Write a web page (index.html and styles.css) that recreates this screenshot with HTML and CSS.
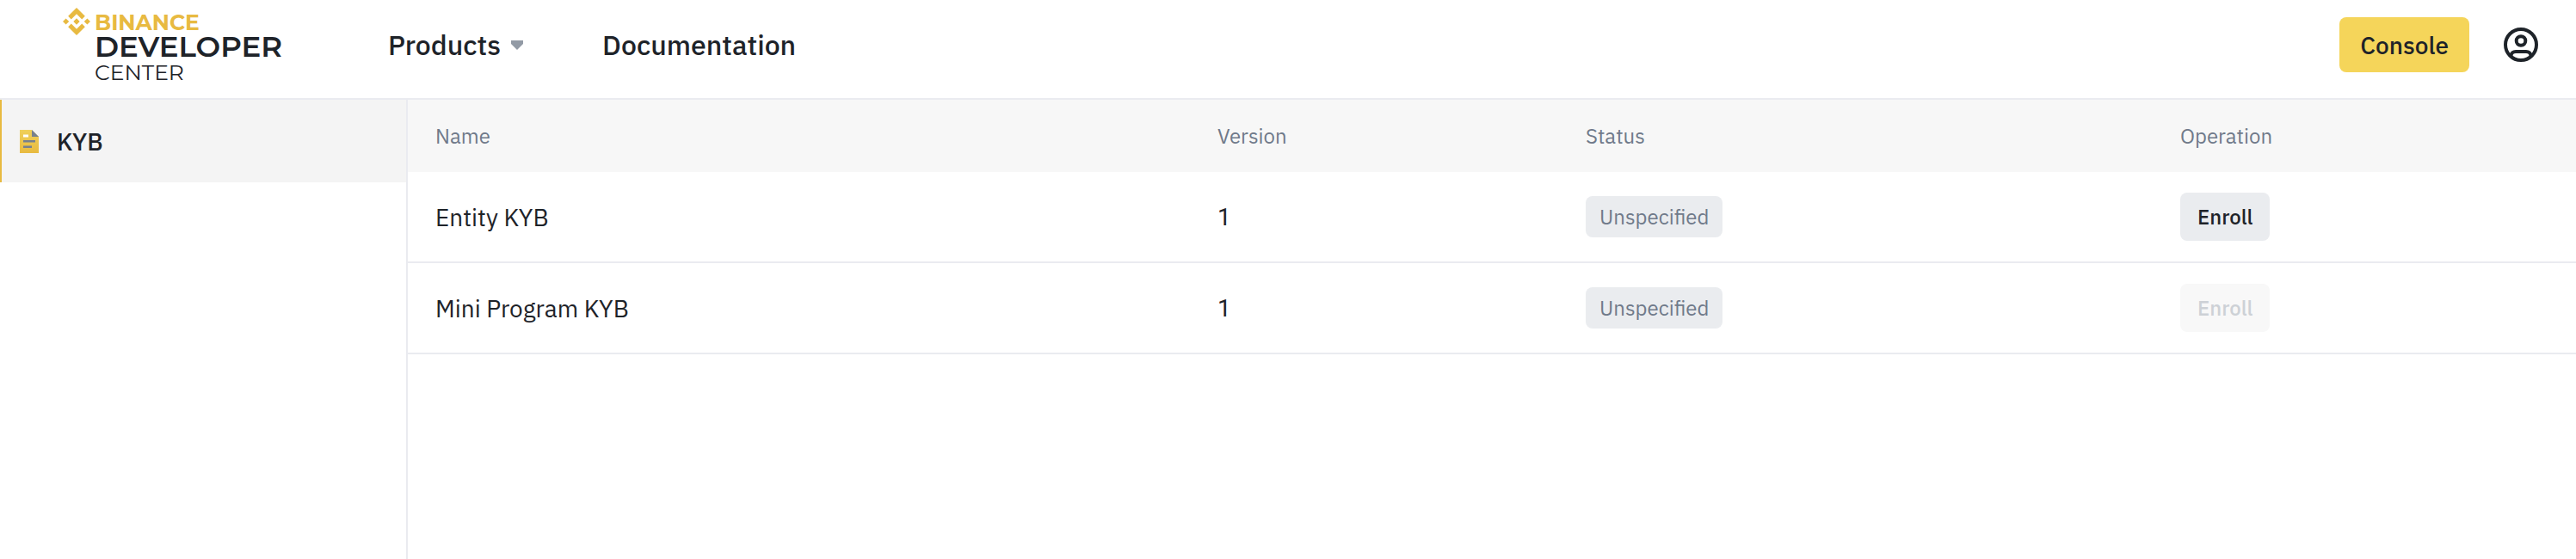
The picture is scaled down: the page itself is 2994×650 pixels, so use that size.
FILE: index.html
```html
<!DOCTYPE html>
<html lang="en">
<head>
  <meta charset="UTF-8" />
  <meta name="viewport" content="width=device-width, initial-scale=1.0"/>
  <title>KYB | Binance Developer Center</title>
  <link rel="stylesheet" href="styles.css">
</head>
<body>
  <header class="header">
    <a href="#" class="logo">
      <svg class="logo-mark" viewBox="0 0 126.61 126.61" aria-hidden="true">
        <path d="M38.73 53.2l24.59-24.58 24.6 24.6 14.3-14.31L63.32 0 24.43 38.89zM0 63.31l14.3-14.31 14.31 14.31-14.31 14.3zM38.73 73.41l24.59 24.59 24.6-24.6 14.31 14.29-38.9 38.91-38.91-38.88zM98 63.31l14.3-14.31 14.31 14.3-14.31 14.32zM77.83 63.3L63.32 48.78 48.8 63.3l14.52 14.53z"/>
      </svg>
      <span class="logo-text">
        <span class="logo-brand">BINANCE</span>
        <span class="logo-main">DEVELOPER</span>
        <span class="logo-sub">CENTER</span>
      </span>
    </a>
    <nav class="nav">
      <button class="nav-link" type="button">Products
        <svg class="caret" viewBox="0 0 14 11" aria-hidden="true"><path d="M0 0h14v4L7 11 0 4z"/></svg>
      </button>
      <a href="#" class="nav-link">Documentation</a>
    </nav>
    <div class="actions">
      <button class="btn btn-primary" type="button">Console</button>
      <button class="user" type="button" aria-label="Account">
        <svg viewBox="0 0 40 40" fill="none" stroke="currentColor" stroke-width="4" aria-hidden="true">
          <circle cx="20" cy="20" r="18"/>
          <circle cx="20" cy="15.500" r="5.300"/>
          <path d="M8.500 33c0-3 2.500-5 5.500-5h12c3 0 5.500 2 5.500 5"/>
        </svg>
      </button>
    </div>
  </header>

  <div class="layout">
    <aside class="sidebar">
      <a href="#" class="side-item active">
        <svg class="doc-icon" viewBox="0 0 22 27" aria-hidden="true">
          <defs>
            <linearGradient id="doc" x1="0" y1="0" x2="0" y2="1">
              <stop offset="0" stop-color="#efd05a"/>
              <stop offset="1" stop-color="#e8ba40"/>
            </linearGradient>
          </defs>
          <path fill="url(#doc)" d="M0 0h14l8 8v19H0z"/>
          <path fill="#76808f" d="M14 0l8 8h-8zM4 12h14v2.500H4zM4 18.500h10V21H4z"/>
          <path fill="#fff" d="M4 5.500h6V8.500H4z"/>
        </svg>
        KYB
      </a>
    </aside>

    <main class="content">
      <table class="table">
        <colgroup>
          <col>
          <col class="col-version">
          <col class="col-status">
          <col class="col-operation">
        </colgroup>
        <thead>
          <tr>
            <th>Name</th>
            <th>Version</th>
            <th>Status</th>
            <th>Operation</th>
          </tr>
        </thead>
        <tbody>
          <tr>
            <td>Entity KYB</td>
            <td class="version">1</td>
            <td><span class="tag">Unspecified</span></td>
            <td><button class="btn btn-small" type="button">Enroll</button></td>
          </tr>
          <tr>
            <td>Mini Program KYB</td>
            <td class="version">1</td>
            <td><span class="tag">Unspecified</span></td>
            <td><button class="btn btn-small" type="button" disabled>Enroll</button></td>
          </tr>
        </tbody>
      </table>
    </main>
  </div>
</body>
</html>
```

FILE: styles.css
```css
* {
  box-sizing: border-box;
}

body {
  margin: 0;
  min-height: 100vh;
  display: flex;
  flex-direction: column;
  background-color: #fff;
  color: #1e2329;
  font-family: "IBM Plex Sans", Roboto, sans-serif;
  font-size: 28px;
}

a {
  color: inherit;
  text-decoration: none;
}

button {
  font-family: inherit;
  color: inherit;
  border: none;
  padding: 0;
  background: none;
  cursor: pointer;
}

.header {
  display: flex;
  align-items: center;
  height: 116px;
  padding: 0 44px 10px 73px;
  border-bottom: 2px solid #eaebf0;
}

.logo {
  display: flex;
  width: 378px;
  gap: 5px;
}

.logo-mark {
  width: 32px;
  height: 32px;
  margin-top: 3px;
  fill: #e8ba41;
}

.logo-text {
  display: flex;
  flex-direction: column;
  padding-top: 8px;
  font-family: Montserrat, Inter, sans-serif;
}

.logo-brand {
  color: #e8ba41;
  font-size: 25px;
  line-height: 24px;
  font-weight: 700;
}

.logo-main {
  font-size: 34px;
  line-height: 32px;
  font-weight: 600;
}

.logo-sub {
  font-size: 25px;
  line-height: 28px;
}

.nav {
  display: flex;
  gap: 92px;
}

.nav-link {
  display: flex;
  align-items: center;
  gap: 12px;
  font-size: 32px;
  line-height: 40px;
  font-weight: 500;
}

.caret {
  width: 14px;
  height: 11px;
  fill: #929aa5;
}

.actions {
  display: flex;
  align-items: center;
  gap: 40px;
  margin-left: auto;
}

.btn {
  border-radius: 8px;
  font-weight: 500;
}

.btn-primary {
  height: 64px;
  padding: 0 24px;
  background-color: #f5d55a;
  font-size: 28px;
}

.user {
  width: 40px;
  height: 40px;
}

.user svg {
  display: block;
}

.layout {
  flex: 1;
  display: flex;
}

.sidebar {
  width: 474px;
  border-right: 2px solid #eaebf0;
}

.side-item {
  display: flex;
  align-items: center;
  gap: 21px;
  height: 96px;
  padding-left: 21px;
  border-left: 2px solid transparent;
  font-weight: 500;
}

.side-item.active {
  background-color: #f4f4f4;
  border-left-color: #e8ba41;
}

.doc-icon {
  width: 22px;
  height: 27px;
}

.content {
  flex: 1;
}

.table {
  width: 100%;
  table-layout: fixed;
  border-collapse: separate;
  border-spacing: 0;
  text-align: left;
}

.col-version {
  width: 428px;
}

.col-status {
  width: 691px;
}

.col-operation {
  width: 492px;
}

.table th {
  height: 84px;
  padding: 0 32px;
  background-color: #f7f7f7;
  color: #707a8a;
  font-size: 24px;
  font-weight: 400;
}

.table td {
  height: 106px;
  padding: 0 32px;
  border-bottom: 2px solid #eaebf0;
}

.version {
  font-family: Roboto, sans-serif;
}

.tag {
  display: inline-flex;
  align-items: center;
  height: 48px;
  padding: 0 16px;
  border-radius: 8px;
  background-color: #eaecef;
  color: #707a8a;
  font-size: 24px;
  vertical-align: middle;
}

.btn-small {
  height: 56px;
  padding: 0 20px;
  background-color: #eaecef;
  font-size: 24px;
  vertical-align: middle;
}

.btn-small:disabled {
  background-color: #f8f8f8;
  color: #cdd1d6;
  cursor: not-allowed;
}
```
